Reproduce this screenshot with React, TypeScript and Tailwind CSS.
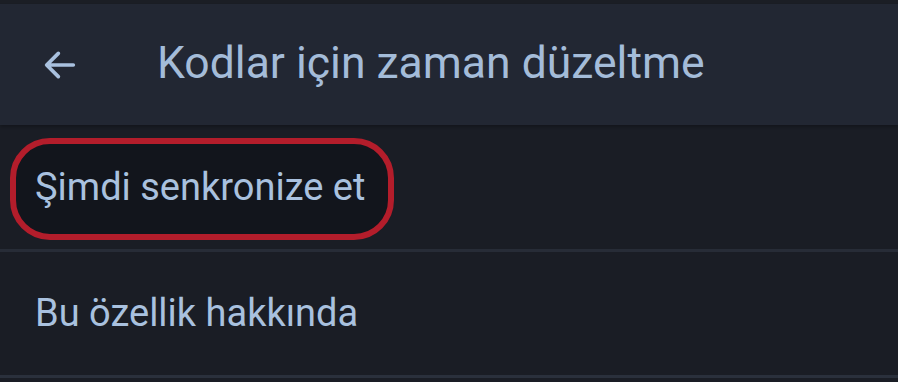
import React from "react";

export default function App() {
  return (
    <div
      className="w-[898px] h-[382px] overflow-hidden bg-[#1a1d25] flex flex-col"
      style={{ fontFamily: "Roboto, 'Noto Sans', sans-serif" }}
    >
      <div className="h-[4px] bg-[#1b1e25]" />
      <div className="h-[121px] bg-[#222733] flex items-center shadow-[0_2px_3px_rgba(0,0,0,0.25)]">
        <div className="w-[157px] flex items-center pl-[40px]">
          <svg width="40" height="40" viewBox="0 0 24 24" fill="none" className="text-[#a9c1df]">
            <path d="M20 12H4.5M11 5l-7 7 7 7" stroke="currentColor" strokeWidth="2.2" strokeLinecap="round" strokeLinejoin="round" />
          </svg>
        </div>
        <span className="text-[44.5px] leading-none text-[#a4bcd9] mt-[-3px]">Kodlar için zaman düzeltme</span>
      </div>
      <div className="h-[124px] flex items-center px-[10px]">
        <div className="h-[102px] w-[384px] rounded-[40px] border-[6px] border-[#b31d2b] bg-[#12151c] flex items-center pl-[19px] mt-[4px]">
          <span className="text-[38px] leading-none text-[#a9c1df] mt-[-4px]">Şimdi senkronize et</span>
        </div>
      </div>
      <div className="h-[3px] bg-[#272c37]" />
      <div className="h-[123px] flex items-center pl-[35px]">
        <span className="text-[38px] leading-none text-[#a9c1df] mt-[-2px]">Bu özellik hakkında</span>
      </div>
      <div className="h-[3px] bg-[#2a303c]" />
    </div>
  );
}
